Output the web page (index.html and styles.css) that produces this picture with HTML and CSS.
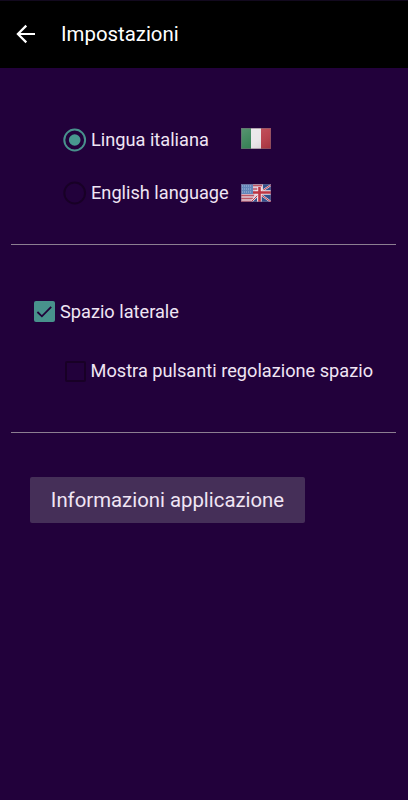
FILE: index.html
```html
<!DOCTYPE html>
<html lang="it">
<head>
<meta charset="utf-8">
<title>Impostazioni</title>
<link rel="stylesheet" href="styles.css">
</head>
<body>
<header class="bar">
  <svg class="back" width="20" height="20" viewBox="0 0 20 20"><path d="M19 10H2M10.3 1.6L1.9 10l8.4 8.4" fill="none" stroke="#fff" stroke-width="2.2"/></svg>
  <h1 class="title">Impostazioni</h1>
</header>
<main class="content">
  <section class="languages">
    <div class="row nested">
      <svg class="control" width="24" height="24" viewBox="0 0 24 24"><circle cx="11.7" cy="12" r="10.4" fill="none" stroke="#48918c" stroke-width="2"/><circle cx="11.7" cy="12" r="5.8" fill="#48998f"/></svg>
      <span class="label language">Lingua italiana</span>
      <svg class="flag italian" width="30" height="21" viewBox="0 0 30 21">
        <defs><linearGradient id="shine" x1="0" y1="0" x2="1" y2="1"><stop offset="0" stop-color="#fff" stop-opacity=".22"/><stop offset=".55" stop-color="#fff" stop-opacity=".08"/><stop offset="1" stop-color="#000" stop-opacity=".12"/></linearGradient></defs>
        <path fill="#29784a" d="M0 0h10v21H0z"/><path fill="#e9e5e8" d="M10 0h10v21H10z"/><path fill="#b63743" d="M20 0h10v21H20z"/><path fill="url(#shine)" d="M0 0h30v21H0z"/><path d="M.5.5h29v20H.5z" fill="none" stroke="#765d73" stroke-opacity=".5"/>
      </svg>
    </div>
    <div class="row nested">
      <svg class="control" width="24" height="24" viewBox="0 0 24 24"><circle cx="11.7" cy="12" r="10.4" fill="none" stroke="#180026" stroke-width="2"/></svg>
      <span class="label language">English language</span>
      <svg class="flag english" width="30" height="18" viewBox="0 0 30 18">
        <path fill="#dfc8d4" d="M0 0h30v18H0z"/>
        <path d="M12 1.5h9M12 5h5M0 11.5h13M0 14.5h12M0 17.5h11" stroke="#bd5665" stroke-width="1.6"/>
        <path fill="#6385b9" d="M0 0h12v10H0z"/>
        <path d="M1 2h10M1 5h10M1 8h10" stroke="#a6badb" stroke-width="1" stroke-dasharray="1 1"/>
        <path fill="#32508c" d="M22 0h8v7h-8zM19 10h11v8H19zM11 18l5-7v7z"/>
        <path d="M19 10l11 8M21 7l9-6M11 17l7-7" stroke="#eee1e8" stroke-width="2"/>
        <path d="M19 10l11 8M21 7l9-6M11 17l7-7" stroke="#bd3749" stroke-width="1"/>
        <path d="M14 8.5h16M18.5 3v15" stroke="#f1e5eb" stroke-width="4.4"/>
        <path d="M12 8.5h18M18.5 3v15" stroke="#bd3442" stroke-width="2.6"/>
        <path d="M.5.5h29v17H.5z" fill="none" stroke="#765d83" stroke-opacity=".45"/>
      </svg>
    </div>
  </section>
  <hr class="divider">
  <section class="spacing">
    <div class="row">
      <svg class="control" width="21" height="21" viewBox="0 0 21 21"><rect width="21" height="21" rx="2" fill="#48918c"/><path d="M3.4 11l4.5 4.3L17.2 5.8" fill="none" stroke="#210139" stroke-width="1.8"/></svg>
      <span class="label">Spazio laterale</span>
    </div>
    <div class="row nested">
      <svg class="control box" width="21" height="21" viewBox="0 0 21 21"><rect x="1" y="1" width="19" height="19" rx="1" fill="none" stroke="#180026" stroke-width="2"/></svg>
      <span class="label">Mostra pulsanti regolazione spazio</span>
    </div>
  </section>
  <hr class="divider">
  <button class="info" type="button">Informazioni applicazione</button>
</main>
</body>
</html>
```
FILE: styles.css
```css
* { box-sizing: border-box; }
body { margin: 0; height: 800px; background: #22013b; color: #f0e5f4; font-family: Roboto, sans-serif; overflow: hidden; }
svg { display: block; flex: none; }
.bar { height: 68px; background: #000; border-top: 1px solid #12091e; display: flex; align-items: center; padding: 0 0 2px 16px; }
.title { margin: 0 0 0 25px; color: #fff; font-size: 20.4px; line-height: 24px; font-weight: 400; }
.content { padding: 0 12px 0 11px; }
.languages { height: 176px; padding-top: 45px; }
.languages .row { height: 53px; }
.row { display: flex; align-items: center; padding-left: 23px; }
.row.nested { padding-left: 52px; }
.label { font-size: 18.2px; line-height: 24px; margin-left: 5px; white-space: nowrap; }
.nested .label { margin-left: 4px; }
.language { width: 150px; }
.flag.italian { margin-top: -3px; }
.divider { margin: 0; border: 0; height: 1px; background: #8c7e91; }
.spacing { height: 187px; padding-top: 37px; }
.spacing .row { height: 59px; }
.spacing .nested { padding: 1px 0 0 54px; }
.nested .box + .label { margin-left: 4.5px; }
.info { display: block; width: 275px; height: 46px; margin: 44px 0 0 19px; padding: 0 0 1px; border: 0; border-radius: 2px; background: #452f58; color: #f0e5f4; font: 400 20.35px/24px Roboto, sans-serif; }
```
